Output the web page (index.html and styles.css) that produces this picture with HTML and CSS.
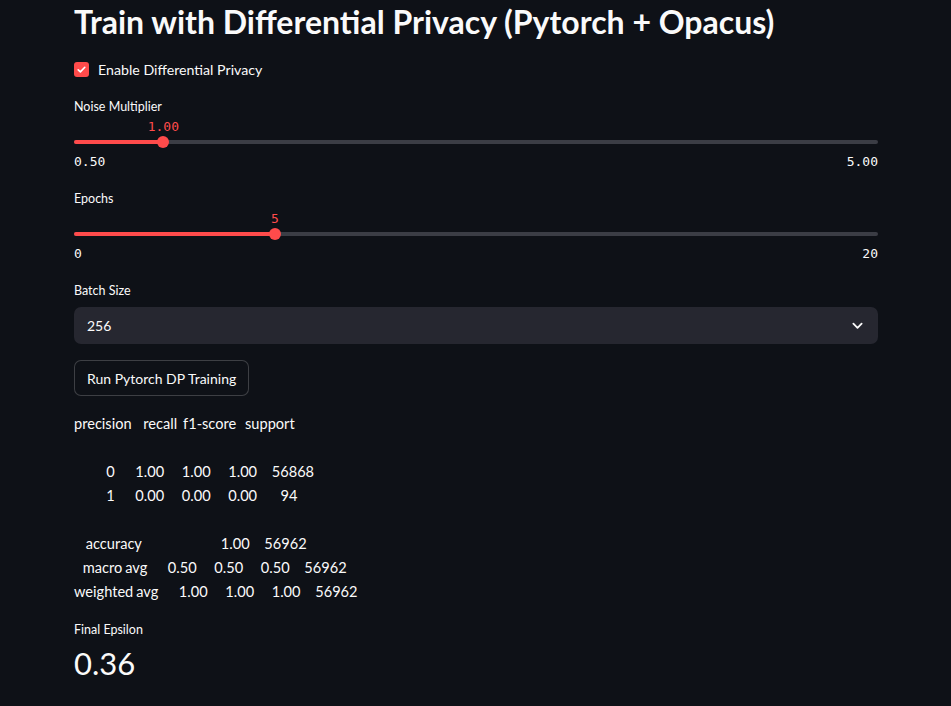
FILE: index.html
```html
<!DOCTYPE html>
<html lang="en">
<head>
<meta charset="utf-8">
<title>Train with Differential Privacy</title>
<link rel="stylesheet" href="styles.css">
</head>
<body>
<main class="main">
  <h1 class="title">Train with Differential Privacy (Pytorch + Opacus)</h1>

  <label class="checkbox">
    <span class="checkbox-box">
      <svg viewBox="0 0 16 16" width="11" height="11"><path d="M3.2 8.4 L6.4 11.4 L12.8 4.8" fill="none" stroke="#fff" stroke-width="2.4" stroke-linecap="round" stroke-linejoin="round"/></svg>
    </span>
    <span class="checkbox-label">Enable Differential Privacy</span>
  </label>

  <div class="slider first">
    <div class="widget-label">Noise Multiplier</div>
    <div class="slider-area">
      <div class="slider-value" style="left: 11.11%">1.00</div>
      <div class="track">
        <div class="track-fill" style="width: 11.11%"></div>
        <div class="thumb" style="left: 11.11%"></div>
      </div>
    </div>
    <div class="slider-range"><span>0.50</span><span>5.00</span></div>
  </div>

  <div class="slider">
    <div class="widget-label">Epochs</div>
    <div class="slider-area">
      <div class="slider-value" style="left: 25%">5</div>
      <div class="track">
        <div class="track-fill" style="width: 25%"></div>
        <div class="thumb" style="left: 25%"></div>
      </div>
    </div>
    <div class="slider-range"><span>0</span><span>20</span></div>
  </div>

  <div class="select-block">
    <div class="widget-label">Batch Size</div>
    <div class="select">
      <span>256</span>
      <svg class="chevron" viewBox="0 0 12 8" width="11" height="8"><path d="M1.5 1.5 L6 6 L10.5 1.5" fill="none" stroke="#fafafa" stroke-width="2" stroke-linecap="round" stroke-linejoin="round"/></svg>
    </div>
  </div>

  <button class="button">Run Pytorch DP Training</button>

  <div class="report">precision    recall  f1-score   support

           0       1.00      1.00      1.00     56868
           1       0.00      0.00      0.00        94

    accuracy                           1.00     56962
   macro avg       0.50      0.50      0.50     56962
weighted avg       1.00      1.00      1.00     56962</div>

  <div class="metric">
    <div class="widget-label">Final Epsilon</div>
    <div class="metric-value">0.36</div>
  </div>
</main>
</body>
</html>
```

FILE: styles.css
```css
* { box-sizing: border-box; }

html, body {
  margin: 0;
  background: #0e1117;
  color: #fafafa;
  font-family: "Lato", "Noto Sans", sans-serif;
}

.main {
  width: 804px;
  margin-left: 74px;
  display: flex;
  flex-direction: column;
}

.title {
  margin: 0;
  font-size: 32px;
  font-weight: 700;
  line-height: 44px;
  white-space: nowrap;
}

.checkbox {
  margin-top: 13px;
  height: 24px;
  display: flex;
  align-items: center;
  gap: 9px;
  font-size: 14.2px;
}

.checkbox-box {
  width: 15px;
  height: 15px;
  border-radius: 3px;
  background: #ff4b4b;
  display: flex;
  align-items: center;
  justify-content: center;
}

.widget-label {
  font-size: 12.5px;
  line-height: 20px;
  height: 20px;
}

.slider { margin-top: 19px; }
.slider.first { margin-top: 16px; }

.slider-area {
  position: relative;
  margin-top: 2px;
  padding-top: 17px;
}

.slider-value {
  position: absolute;
  top: 0;
  transform: translateX(-50%);
  font-family: "DejaVu Sans Mono", "Liberation Mono", monospace;
  font-size: 13px;
  line-height: 16px;
  color: #ff4b4b;
}

.track {
  position: relative;
  height: 12px;
  display: flex;
  align-items: center;
}

.track::before {
  content: "";
  position: absolute;
  left: 0;
  right: 0;
  top: 4px;
  height: 4px;
  border-radius: 2px;
  background: #3b3d45;
}

.track-fill {
  position: relative;
  height: 4px;
  border-radius: 2px;
  background: #ff4b4b;
}

.thumb {
  position: absolute;
  top: 0;
  width: 12px;
  height: 12px;
  border-radius: 50%;
  background: #ff4b4b;
  transform: translateX(-50%);
}

.slider-range {
  margin-top: 6px;
  display: flex;
  justify-content: space-between;
  font-family: "DejaVu Sans Mono", "Liberation Mono", monospace;
  font-size: 13px;
  line-height: 16px;
}

.select-block { margin-top: 19px; }

.select {
  margin-top: 6px;
  height: 37px;
  border-radius: 7px;
  background: #262730;
  display: flex;
  align-items: center;
  justify-content: space-between;
  padding: 0 15px 0 13px;
  font-size: 14px;
}

.button {
  margin-top: 16px;
  align-self: flex-start;
  height: 36px;
  padding: 0 12px;
  border: 1px solid rgba(250, 250, 250, 0.2);
  border-radius: 7px;
  background: #0e1117;
  color: #fafafa;
  font-family: inherit;
  font-size: 14px;
}

.report {
  margin-top: 16px;
  white-space: pre;
  font-size: 14.6px;
  line-height: 24px;
  word-spacing: -0.8px;
}

.metric { margin-top: 16px; }

.metric-value {
  margin-top: 3px;
  font-size: 31px;
  line-height: 40px;
}
```
